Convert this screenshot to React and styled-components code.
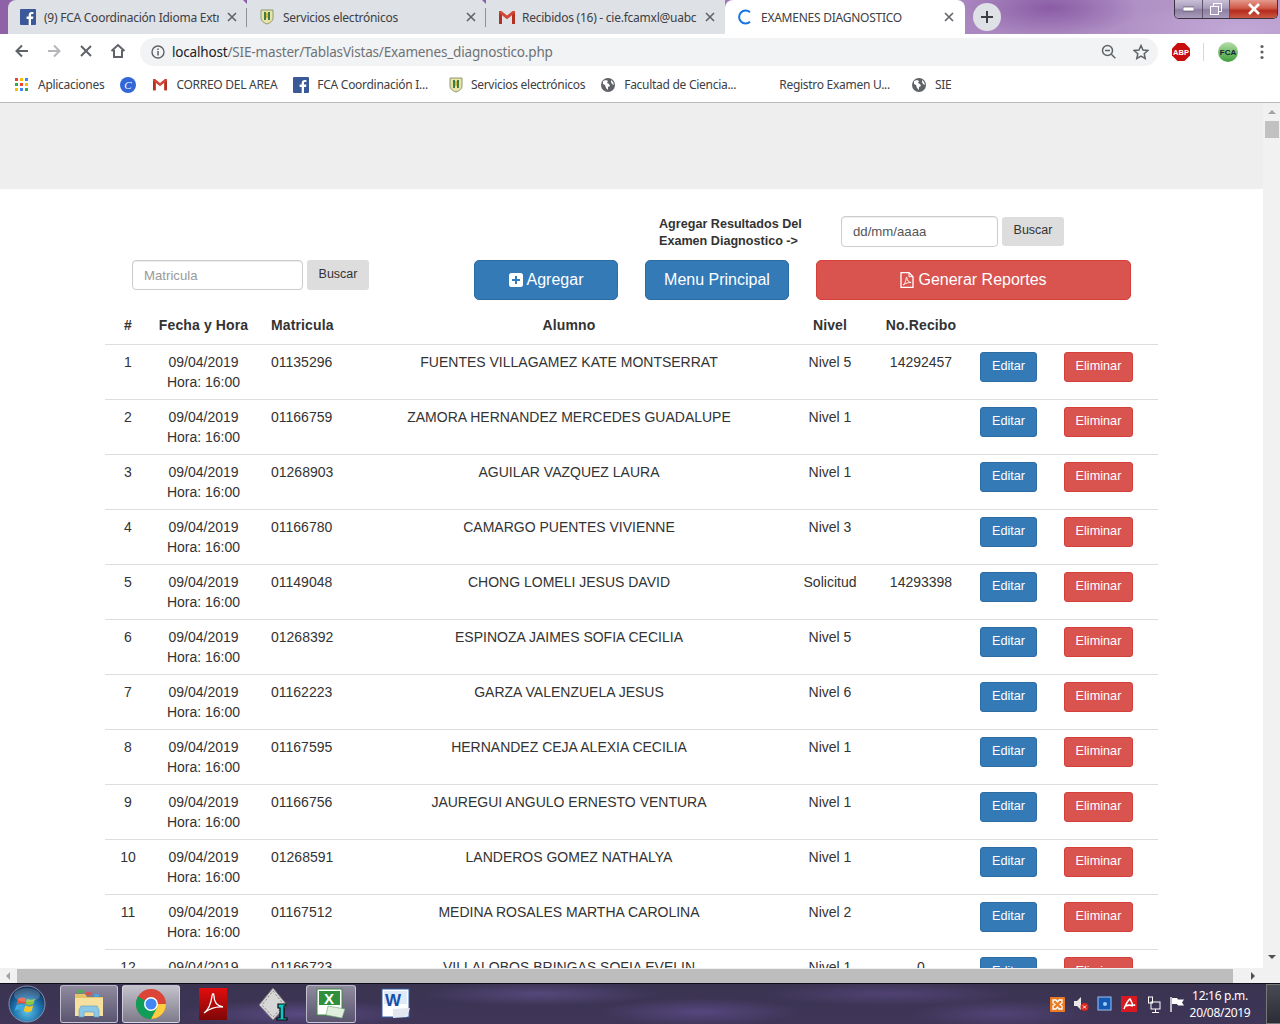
import React from "react";
import styled, { createGlobalStyle } from "styled-components";

const Global = createGlobalStyle`
  html, body { margin: 0; padding: 0; background: #fff; overflow: hidden; }
  * { box-sizing: border-box; }
`;

const Screen = styled.div`
  width: 1280px; height: 1024px; display: flex; flex-direction: column; overflow: hidden;
  font-family: "Liberation Sans", Arial, sans-serif; color: #333; font-size: 14px;
`;

/* ---------- Chrome ---------- */
const UI = `"Noto Sans", "Open Sans", sans-serif`;

const TabStrip = styled.div`
  height: 34px; flex: none; display: flex; position: relative; padding-left: 8px;
  background:
    radial-gradient(ellipse 90px 30px at 1050px 8px, #8a5ca6 0%, transparent 100%),
    radial-gradient(ellipse 120px 30px at 1240px 30px, #c1a8d6 0%, transparent 100%),
    linear-gradient(90deg, #8f62a8 0%, #9c74b2 50%, #b79acb 100%);
`;
const Tab = styled.div`
  width: ${p => p.$w}px; height: 34px; flex: none; display: flex; align-items: center; position: relative;
  background: ${p => (p.$active ? "#fff" : "#dee1e6")};
  border-radius: ${p => p.$radius || "0"};
  padding-left: ${p => p.$pad}px;
  ${p => p.$sep && `
    &::after { content: ""; position: absolute; right: 0; top: 8px; width: 1px; height: 19px; background: #8f9296; }
    &::before { content: ""; position: absolute; right: -4px; top: 0; border: 4px solid transparent; border-top-color: #8a5ca6; }
  `}
`;
const TabTitle = styled.span`
  font: 12px ${UI}; color: #3c4043; margin-left: ${p => p.$ml}px; width: ${p => p.$w}px; white-space: nowrap; overflow: hidden;
  letter-spacing: -0.25px;
`;
const TabClose = styled.svg`
  position: absolute; left: ${p => p.$x}px; top: 12px; width: 10px; height: 10px;
`;
const NewTab = styled.div`
  width: 28px; height: 28px; border-radius: 50%; background: #dee1e6; margin: 3px 0 0 8px;
  display: flex; align-items: center; justify-content: center;
`;
const WinButtons = styled.div`
  position: absolute; left: 1174px; top: 0; width: 104px; height: 19px; display: flex;
  border: 1px solid #3a3340; border-top: none; border-radius: 0 0 5px 5px; overflow: hidden;
`;
const WinButton = styled.div`
  width: ${p => p.$w}px; display: flex; align-items: center; justify-content: center;
  background: ${p => p.$red
    ? "linear-gradient(#e49a8c 0%, #cf5a48 45%, #b42a1c 60%, #cc5a44 100%)"
    : "linear-gradient(#c9c0d6 0%, #a99cbc 45%, #8d7ea2 55%, #a99cbc 100%)"};
  border-right: ${p => p.$red ? "none" : "1px solid #5d5468"};
`;

const Toolbar = styled.div`
  height: 33px; flex: none; background: #fff; display: flex; align-items: center; position: relative;
`;
const NavSlot = styled.div`
  width: 32px; height: 32px; display: flex; align-items: center; justify-content: center; flex: none;
`;
const NavGroup = styled.div`display: flex; margin: 0 6px;`;
const Omnibox = styled.div`
  width: 1018px; height: 28px; border-radius: 14px; background: #f1f3f4; display: flex; align-items: center;
  margin-left: 0; padding-left: 11px; position: relative; flex: none; margin-top: 3px;
`;
const Url = styled.span`
  font: 13.5px ${UI}; color: #6e7276; margin-left: 7px; letter-spacing: -0.17px; white-space: nowrap;
  b { font-weight: 400; color: #202124; }
`;
const OmniIcons = styled.div`
  margin-left: auto; display: flex; gap: 16px; align-items: center; padding-right: 9px;
`;
const ToolEnd = styled.div`
  display: flex; align-items: center; margin-left: 14px; margin-top: 2px;
`;
const Divider = styled.div`width: 1px; height: 18px; background: #d5d7da; margin: 0 14px 0 13px;`;

const Bookmarks = styled.div`
  height: 36px; flex: none; background: #fff; border-bottom: 1px solid #b9b9b9; display: flex; align-items: center;
  padding-left: 15px;
`;
const Bookmark = styled.div`
  display: flex; align-items: center; margin-left: ${p => p.$ml || 0}px; flex: none;
`;
const BookmarkText = styled.span`
  font: 12px ${UI}; color: #3c4043; margin-left: ${p => p.$ml ?? 8}px; white-space: nowrap; letter-spacing: -0.28px;
`;

/* ---------- Viewport ---------- */
const Viewport = styled.div`height: 865px; flex: none; display: flex;`;
const Page = styled.div`width: 1263px; overflow: hidden; flex: none; background: #fff;`;
const Banner = styled.div`height: 86px; background: #eee;`;
const Content = styled.div`padding-top: 27px;`;

const TopRow = styled.div`
  display: flex; align-items: ${p => p.$align || "flex-start"}; height: ${p => p.$h}px;
  padding-left: ${p => p.$pl}px;
`;
const Note = styled.div`
  width: 182px; font-size: 12.6px; font-weight: 700; line-height: 17px; color: #333; padding-top: 0; margin-top: 0;
`;
const Field = styled.input`
  width: ${p => p.$w}px; height: ${p => p.$h}px; border: 1px solid #ccc; border-radius: 4px; background: #fff;
  padding: 0 11px; font: 13.2px "Liberation Sans", Arial, sans-serif; color: #555; outline: none;
  box-shadow: inset 0 1px 1px rgba(0,0,0,.075); flex: none;
  &::placeholder { color: #999; opacity: 1; }
`;
const DateField = styled(Field)`
  &::placeholder { color: #555; }
`;
const SearchBtn = styled.div`
  width: 62px; height: 30px; background: #ddd; border-radius: 3px; margin-left: 4px; flex: none;
  display: flex; align-items: center; justify-content: center; font-size: 12.5px; color: #333; padding-bottom: 3px;
  margin-top: ${p => p.$mt || 0}px;
`;
const BigBtn = styled.div`
  width: ${p => p.$w}px; height: 40px; border-radius: 5px; flex: none; margin-left: ${p => p.$ml}px;
  background: ${p => (p.$red ? "#d9534f" : "#337ab7")}; border: 1px solid ${p => (p.$red ? "#d43f3a" : "#2e6da4")};
  color: #fff; font-size: 16px; display: flex; align-items: center; justify-content: center; gap: 4px;
`;

const Table = styled.table`
  margin-left: 105px; width: 1053px; table-layout: fixed; border-collapse: collapse; margin-top: 0;
`;
const Th = styled.th`
  height: 37px; padding: 0 0 0 ${p => p.$pl || 0}px; font-size: 14px; font-weight: 700; letter-spacing: .12px;
  text-align: ${p => p.$left ? "left" : "center"}; border-bottom: 1px solid #ddd; vertical-align: middle; color: #333;
`;
const Td = styled.td`
  height: 55px; padding: 7px 0 7px ${p => p.$pl || 0}px; font-size: 14px; line-height: 20px; vertical-align: top;
  text-align: ${p => p.$left ? "left" : "center"}; border-bottom: 1px solid #ddd; color: #333; white-space: nowrap;
`;
const RowBtn = styled.div`
  display: inline-flex; height: 30px; width: ${p => p.$w}px; align-items: center; justify-content: center;
  border-radius: 3px; color: #fff; font-size: 12.7px; padding-bottom: 2px;
  background: ${p => (p.$red ? "#d9534f" : "#337ab7")}; border: 1px solid ${p => (p.$red ? "#d43f3a" : "#2e6da4")};
`;

const VBar = styled.div`
  width: 17px; flex: none; background: #f1f1f1; position: relative; display: flex; flex-direction: column; align-items: center;
`;
const VThumb = styled.div`
  width: 14px; height: 17px; background: #c1c1c1; margin-top: 18px;
`;
const Arrow = styled.div`
  width: 0; height: 0; border: 4px solid transparent;
  ${p => p.$dir === "up" && `border-bottom-color: #a3a3a3; position:absolute; top: 3px;`}
  ${p => p.$dir === "down" && `border-top-color: #505050; position:absolute; bottom: -1px; margin-bottom: 6px;`}
  ${p => p.$dir === "left" && `border-right-color: #a3a3a3; margin-left: 2px;`}
  ${p => p.$dir === "right" && `border-left-color: #505050; margin-left: 18px;`}
`;
const HBar = styled.div`
  height: 15px; flex: none; background: #f1f1f1; display: flex; align-items: center;
`;
const HThumb = styled.div`width: 1216px; height: 14px; background: #bdbdbd; margin-left: 7px; flex: none;`;

/* ---------- Taskbar ---------- */
const Taskbar = styled.div`
  height: 41px; flex: none; position: relative; display: flex; align-items: center; border-top: 1px solid #0e0c16;
  background:
    radial-gradient(ellipse 120px 14px at 300px 30px, rgba(110,90,165,.55), transparent),
    radial-gradient(ellipse 120px 12px at 540px 10px, rgba(100,85,150,.6), transparent),
    radial-gradient(ellipse 100px 14px at 700px 28px, rgba(105,85,160,.55), transparent),
    radial-gradient(ellipse 130px 12px at 890px 10px, rgba(100,80,150,.5), transparent),
    radial-gradient(ellipse 90px 14px at 1000px 30px, rgba(100,80,150,.5), transparent),
    linear-gradient(#3a3350, #3f3658);
`;
const TaskItem = styled.div`
  width: ${p => p.$w}px; height: 38px; flex: none; margin-left: ${p => p.$ml}px; display: flex; align-items: center; justify-content: center;
  ${p => p.$open && `
    border-radius: 3px; border: 1px solid rgba(230,230,240,.65);
    background: linear-gradient(${p.$bright ? "#c4c2cc, #7d7a8a" : "#8f8a9e, #5a5470"});
  `}
`;
const Tray = styled.div`
  margin-left: auto; display: flex; align-items: center; height: 100%;
`;
const TrayIcon = styled.div`
  width: 16px; height: 18px; display: flex; align-items: center; justify-content: center; margin-right: ${p => p.$mr ?? 8}px;
`;
const Clock = styled.div`
  width: 64px; margin-left: 3px; text-align: center; color: #fff; font: 12px/17px ${UI}; letter-spacing: -0.3px;
`;
const ShowDesktop = styled.div`
  width: 14px; height: 100%; margin-left: 14px; border: 1px solid #777; border-right: none;
  background: linear-gradient(#4a4a55, #2c2c36);
`;

/* ---------- Icons ---------- */
const Fb = ({ s = 16 }) => (
  <svg width={s} height={s} viewBox="0 0 16 16"><rect width="16" height="16" rx="1" fill="#3b5998" /><path d="M11 16V10h2l.4-2.4H11V6.2c0-.7.3-1.1 1.2-1.1h1.2V3c-.5-.1-1.1-.1-1.7-.1-1.8 0-3 1.1-3 3.1v1.6H6.6V10h2.1v6z" fill="#fff" /></svg>
);
const Gmail = ({ s = 16 }) => (
  <svg width={s} height={s * 0.875} viewBox="0 0 16 14"><path d="M0 1h2.4L8 5.6 13.6 1H16v13h-3V5.3L8 9.3 3 5.3V14H0z" fill="#d14836" /><path d="M3 14V5.3L0 3v11z" fill="#b23121" /><path d="M13 14V5.3L16 3v11z" fill="#b23121" /></svg>
);
const Shield = () => (
  <svg width="14" height="16" viewBox="0 0 14 16"><path d="M1 1h12v8c0 3-3 5-6 6-3-1-6-3-6-6z" fill="#e9e3a8" stroke="#8c9a70" /><path d="M4 3h2v8H4zM8 3h2v8H8z" fill="#3f7d46" /><path d="M6 4h2v5H6z" fill="#d9b93f" /></svg>
);
const Globe = () => (
  <svg width="14" height="14" viewBox="0 0 14 14"><circle cx="7" cy="7" r="7" fill="#5f6368" /><path d="M2 3l3-1 2 1-1 2 2 1 1 2-2 1v3L5 10 4 7 2 6zM10 2l2 2 1 3-2-1-1-2z" fill="#fff" /></svg>
);
const Close = ({ x }) => (
  <TabClose $x={x} viewBox="0 0 10 10"><path d="M1 1l8 8M9 1l-8 8" stroke="#5f6368" strokeWidth="1.6" /></TabClose>
);
const Nav = ({ d, c = "#5f6368", w = 2 }) => (
  <NavSlot><svg width="18" height="18" viewBox="0 0 18 18" fill="none"><path d={d} stroke={c} strokeWidth={w} /></svg></NavSlot>
);
const AppsGrid = () => (
  <svg width="13" height="13" viewBox="0 0 13 13">
    {[["#ea4335", "#fbbc05", "#4285f4"], ["#34a853", "#ea4335", "#fbbc05"], ["#fbbc05", "#4285f4", "#34a853"]].map((r, y) =>
      r.map((c, x) => <rect key={x + "-" + y} x={x * 5} y={y * 5} width="3" height="3" fill={c} />))}
  </svg>
);
const Abp = () => (
  <svg width="18" height="18" viewBox="0 0 18 18"><path d="M5.5 0h7L18 5.5v7L12.5 18h-7L0 12.5v-7z" fill="#c70d0d" /><text x="9" y="12" fontSize="7.5" fontWeight="700" textAnchor="middle" fill="#fff" fontFamily="Liberation Sans">ABP</text></svg>
);
const Avatar = () => (
  <svg width="20" height="20" viewBox="0 0 20 20"><defs><linearGradient id="av" x1="0" y1="0" x2="0" y2="1"><stop offset="0" stopColor="#b6dfa9" /><stop offset="1" stopColor="#3d9d3a" /></linearGradient></defs><circle cx="10" cy="10" r="10" fill="url(#av)" /><text x="10" y="13" fontSize="8" fontWeight="700" textAnchor="middle" fill="#123" fontFamily="Liberation Sans">FCA</text></svg>
);
const Orb = () => (
  <svg width="38" height="38" viewBox="0 0 38 38">
    <defs><radialGradient id="orb" cx="50%" cy="70%" r="65%"><stop offset="0" stopColor="#5fc4e8" /><stop offset=".6" stopColor="#1b6ea8" /><stop offset="1" stopColor="#0e2f57" /></radialGradient></defs>
    <circle cx="19" cy="19" r="18" fill="url(#orb)" stroke="#8a8fa8" />
    <path d="M10 14c3-2 5-2 8-.5L16.500 19c-3-1.500-5-1.500-8 .5z" fill="#e8563a" />
    <path d="M19 13.700c3 1.500 5 1.500 8 0L25.500 19c-3 1.500-5 1.500-8 0z" fill="#8cc63f" />
    <path d="M8.200 20.500c3-2 5-2 8-.5L14.700 25.500c-3-1.500-5-1.500-8 .5z" fill="#40a9e0" />
    <path d="M17.200 20.500c3 1.500 5 1.500 8 0L23.700 26c-3 1.500-5 1.500-8 0z" fill="#f7c325" />
    <ellipse cx="19" cy="10" rx="13" ry="7" fill="rgba(255,255,255,.18)" />
  </svg>
);
const Folder = () => (
  <svg width="34" height="34" viewBox="0 0 34 34">
    <path d="M3 7h10l2 3h16v19H3z" fill="#e5c468" /><path d="M3 11h28v18H3z" fill="#f6e0a0" />
    <rect x="6" y="3" width="5" height="3" fill="#4caf50" /><rect x="14" y="5" width="5" height="3" fill="#d9534f" /><rect x="22" y="7" width="5" height="3" fill="#4aa3df" />
    <path d="M9 19h16l2 4v7h-5v-5H12v5H7v-7z" fill="#8cc8e8" stroke="#5a9cc0" strokeWidth=".6" />
  </svg>
);
const ChromeLogo = () => (
  <svg width="32" height="32" viewBox="0 0 32 32">
    <circle cx="16" cy="16" r="15" fill="#db4437" />
    <path d="M16 16L3 8.500A15 15 0 0 0 16 31l7-11z" fill="#0f9d58" />
    <path d="M16 16h15A15 15 0 0 1 16 31l7-13z" fill="#ffcd40" />
    <circle cx="16" cy="16" r="7" fill="#fff" /><circle cx="16" cy="16" r="5.500" fill="#4285f4" />
  </svg>
);
const Acrobat = () => (
  <svg width="28" height="32" viewBox="0 0 28 32">
    <defs><linearGradient id="ac" x1="0" y1="0" x2="0" y2="1"><stop offset="0" stopColor="#e30d0d" /><stop offset="1" stopColor="#7e0606" /></linearGradient></defs>
    <rect width="28" height="32" fill="url(#ac)" />
    <path d="M5 25c4-3 7-9 8-17 .3-3 2-3 2 0 0 6 3 10 9 11-6-.5-12 .5-19 6z" fill="none" stroke="#fff" strokeWidth="1.300" />
  </svg>
);
const Odd = () => (
  <svg width="34" height="36" viewBox="0 0 34 36">
    <path d="M15 2l14 17-14 15L1 19z" fill="#d7d7d7" stroke="#777" />
    <path d="M15 5l11 14-11 12L4 19z" fill="none" stroke="#888" strokeDasharray="2 2" />
    <path d="M20 18h8v2h-2v12h3v2H19v-2h3V22h-2z" fill="#13c4c4" stroke="#0a0a0a" strokeWidth="1.200" />
  </svg>
);
const Excel = () => (
  <svg width="30" height="32" viewBox="0 0 30 32">
    <rect x="1" y="1" width="25" height="26" fill="#fff" stroke="#3a8a3f" />
    <rect x="3" y="3" width="21" height="14" fill="#2f8f3a" />
    <text x="13" y="16" fontSize="15" fontWeight="700" textAnchor="middle" fill="#fff" fontFamily="Liberation Sans">X</text>
    <path d="M12 18l17 3-3 9-16-3z" fill="#dfeedd" stroke="#6aa86f" strokeWidth=".6" />
  </svg>
);
const Word = () => (
  <svg width="30" height="32" viewBox="0 0 30 32">
    <rect x="1" y="1" width="27" height="28" fill="#fff" stroke="#2f5ea8" />
    <rect x="3" y="3" width="23" height="13" fill="#dfe9f8" />
    <text x="12" y="18" fontSize="17" fontWeight="700" textAnchor="middle" fill="#1450a8" fontFamily="Liberation Sans">W</text>
    <path d="M12 21l17-1-3 9-14 1z" fill="#e2e6ee" />
  </svg>
);

const rows = [
  ["01135296", "FUENTES VILLAGAMEZ KATE MONTSERRAT", "Nivel 5", "14292457"],
  ["01166759", "ZAMORA HERNANDEZ MERCEDES GUADALUPE", "Nivel 1", ""],
  ["01268903", "AGUILAR VAZQUEZ LAURA", "Nivel 1", ""],
  ["01166780", "CAMARGO PUENTES VIVIENNE", "Nivel 3", ""],
  ["01149048", "CHONG LOMELI JESUS DAVID", "Solicitud", "14293398"],
  ["01268392", "ESPINOZA JAIMES SOFIA CECILIA", "Nivel 5", ""],
  ["01162223", "GARZA VALENZUELA JESUS", "Nivel 6", ""],
  ["01167595", "HERNANDEZ CEJA ALEXIA CECILIA", "Nivel 1", ""],
  ["01166756", "JAUREGUI ANGULO ERNESTO VENTURA", "Nivel 1", ""],
  ["01268591", "LANDEROS GOMEZ NATHALYA", "Nivel 1", ""],
  ["01167512", "MEDINA ROSALES MARTHA CAROLINA", "Nivel 2", ""],
  ["01166723", "VILLALOBOS BRINGAS SOFIA EVELIN", "Nivel 1", "0"],
];

export default function App() {
  return (
    <Screen>
      <Global />
      <TabStrip>
        <Tab $w={239} $pad={12} $sep $radius="8px 0 0 0">
          <Fb /><TabTitle $ml={8} $w={175}>(9) FCA Coordinación Idioma Extr</TabTitle><Close x={219} />
        </Tab>
        <Tab $w={239} $pad={13} $sep>
          <Shield /><TabTitle $ml={9} $w={175}>Servicios electrónicos</TabTitle><Close x={219} />
        </Tab>
        <Tab $w={239} $pad={13}>
          <Gmail /><TabTitle $ml={7} $w={175}>Recibidos (16) - cie.fcamxl@uabc</TabTitle><Close x={219} />
        </Tab>
        <Tab $w={240} $pad={12} $active $radius="8px 8px 0 0">
          <svg width="16" height="16" viewBox="0 0 16 16" fill="none"><path d="M13 3.200A6.500 6.500 0 1 0 13 12.800" stroke="#1a73e8" strokeWidth="2" /></svg>
          <TabTitle $ml={8} $w={175}>EXAMENES DIAGNOSTICO</TabTitle><Close x={219} />
        </Tab>
        <NewTab>
          <svg width="14" height="14" viewBox="0 0 14 14"><path d="M7 1v12M1 7h12" stroke="#3c4043" strokeWidth="2" /></svg>
        </NewTab>
        <WinButtons>
          <WinButton $w={28}><svg width="11" height="6" viewBox="0 0 11 6"><rect y="1" width="11" height="4" fill="#fff" stroke="#444" strokeWidth=".6" /></svg></WinButton>
          <WinButton $w={27}><svg width="12" height="12" viewBox="0 0 12 12"><rect x="3.500" y=".5" width="8" height="8" fill="none" stroke="#fff" /><rect x=".5" y="3.500" width="8" height="8" fill="#a99cbc" stroke="#fff" /></svg></WinButton>
          <WinButton $w={47} $red><svg width="14" height="12" viewBox="0 0 14 12"><path d="M2 1l10 10M12 1L2 11" stroke="#fff" strokeWidth="2.600" /></svg></WinButton>
        </WinButtons>
      </TabStrip>

      <Toolbar>
        <NavGroup>
          <Nav d="M15 9H4M9 3.500L3.500 9 9 14.500" />
          <Nav d="M3 9h11M9 3.500L14.500 9 9 14.500" c="#b4b6b9" />
          <Nav d="M4 4l10 10M14 4L4 14" />
          <Nav d="M2.500 9L9 3l6.500 6M5 8v7h8V8" />
        </NavGroup>
        <Omnibox>
          <svg width="14" height="14" viewBox="0 0 14 14" fill="none"><circle cx="7" cy="7" r="6" stroke="#5f6368" strokeWidth="1.400" /><path d="M7 6v4.500M7 3.500v1.500" stroke="#5f6368" strokeWidth="1.500" /></svg>
          <Url><b>localhost</b>/SIE-master/TablasVistas/Examenes_diagnostico.php</Url>
          <OmniIcons>
            <svg width="16" height="16" viewBox="0 0 16 16" fill="none"><circle cx="6.500" cy="6.500" r="5" stroke="#5f6368" strokeWidth="1.500" /><path d="M4 6.500h5M10.300 10.300l4 4" stroke="#5f6368" strokeWidth="1.500" /></svg>
            <svg width="16" height="16" viewBox="0 0 16 16" fill="none"><path d="M8 1.500l2 4.500 4.800.5-3.600 3.200 1 4.800L8 12.100l-4.200 2.400 1-4.800L1.200 6.500 6 6z" stroke="#5f6368" strokeWidth="1.500" /></svg>
          </OmniIcons>
        </Omnibox>
        <ToolEnd>
          <Abp />
          <Divider />
          <Avatar />
          <svg style={{ marginLeft: 22 }} width="4" height="16" viewBox="0 0 4 16"><circle cx="2" cy="2.500" r="1.600" fill="#5f6368" /><circle cx="2" cy="8" r="1.600" fill="#5f6368" /><circle cx="2" cy="13.500" r="1.600" fill="#5f6368" /></svg>
        </ToolEnd>
      </Toolbar>

      <Bookmarks>
        <Bookmark><AppsGrid /><BookmarkText $ml={10}>Aplicaciones</BookmarkText></Bookmark>
        <Bookmark $ml={16}>
          <svg width="16" height="16" viewBox="0 0 16 16"><circle cx="8" cy="8" r="8" fill="#3367d6" /><text x="8" y="12" fontSize="11" fontStyle="italic" textAnchor="middle" fill="#fff" fontFamily="Liberation Serif">C</text></svg>
        </Bookmark>
        <Bookmark $ml={17}><Gmail s={14} /><BookmarkText $ml={9}>CORREO DEL AREA</BookmarkText></Bookmark>
        <Bookmark $ml={16}><Fb /><BookmarkText>FCA Coordinación I...</BookmarkText></Bookmark>
        <Bookmark $ml={21}><Shield /><BookmarkText>Servicios electrónicos</BookmarkText></Bookmark>
        <Bookmark $ml={16}><Globe /><BookmarkText $ml={9}>Facultad de Ciencia...</BookmarkText></Bookmark>
        <Bookmark $ml={43}><BookmarkText $ml={0}>Registro Examen U...</BookmarkText></Bookmark>
        <Bookmark $ml={22}><Globe /><BookmarkText $ml={9}>SIE</BookmarkText></Bookmark>
      </Bookmarks>

      <Viewport>
        <Page>
          <Banner />
          <Content>
            <TopRow $h={44} $pl={659}>
              <Note>Agregar Resultados Del<br />Examen Diagnostico -&gt;</Note>
              <DateField $w={157} $h={31} placeholder="dd/mm/aaaa" readOnly />
              <SearchBtn $mt={1} style={{ height: 29 }}>Buscar</SearchBtn>
            </TopRow>
            <TopRow $h={47} $pl={132}>
              <Field $w={171} $h={30} placeholder="Matricula" readOnly />
              <SearchBtn>Buscar</SearchBtn>
              <BigBtn $w={144} $ml={105}>
                <svg width="14" height="14" viewBox="0 0 14 14"><rect width="14" height="14" rx="2.500" fill="#fff" /><path d="M7 3v8M3 7h8" stroke="#337ab7" strokeWidth="2" /></svg>
                Agregar
              </BigBtn>
              <BigBtn $w={144} $ml={27}>Menu Principal</BigBtn>
              <BigBtn $w={315} $ml={27} $red>
                <svg width="14" height="16" viewBox="0 0 14 16" fill="none"><path d="M1 .7h8l4 4v10.600H1z" stroke="#fff" strokeWidth="1.300" /><path d="M9 .7v4h4" stroke="#fff" /><path d="M3 13c2-1.500 3-4 3.200-7 .2-1 .9-1 .9 0 0 2.500 1.500 4 4 4.500-2.500 0-5 .5-8 2.500z" stroke="#fff" strokeWidth=".9" /></svg>
                Generar Reportes
              </BigBtn>
            </TopRow>
            <Table>
              <colgroup>
                <col width="46" /><col width="105" /><col width="95" /><col width="436" /><col width="86" /><col width="96" /><col width="80" /><col width="109" />
              </colgroup>
              <thead>
                <tr>
                  <Th>#</Th><Th>Fecha y Hora</Th><Th $left $pl={15}>Matricula</Th><Th>Alumno</Th><Th>Nivel</Th><Th>No.Recibo</Th><Th /><Th />
                </tr>
              </thead>
              <tbody>
                {rows.map((r, i) => (
                  <tr key={r[0]}>
                    <Td>{i + 1}</Td>
                    <Td>09/04/2019<br />Hora: 16:00</Td>
                    <Td $left $pl={15}>{r[0]}</Td>
                    <Td>{r[1]}</Td>
                    <Td>{r[2]}</Td>
                    <Td>{r[3]}</Td>
                    <Td $left $pl={11}><RowBtn $w={57}>Editar</RowBtn></Td>
                    <Td $left $pl={15}><RowBtn $w={69} $red>Eliminar</RowBtn></Td>
                  </tr>
                ))}
              </tbody>
            </Table>
          </Content>
        </Page>
        <VBar>
          <Arrow $dir="up" />
          <VThumb />
          <Arrow $dir="down" />
        </VBar>
      </Viewport>
      <HBar>
        <Arrow $dir="left" />
        <HThumb />
        <Arrow $dir="right" />
      </HBar>

      <Taskbar>
        <TaskItem $w={38} $ml={8}><Orb /></TaskItem>
        <TaskItem $w={58} $ml={14} $open><Folder /></TaskItem>
        <TaskItem $w={58} $ml={4} $open $bright><ChromeLogo /></TaskItem>
        <TaskItem $w={30} $ml={18}><Acrobat /></TaskItem>
        <TaskItem $w={34} $ml={30}><Odd /></TaskItem>
        <TaskItem $w={50} $ml={14} $open><Excel /></TaskItem>
        <TaskItem $w={30} $ml={25}><Word /></TaskItem>
        <Tray>
          <TrayIcon>
            <svg width="15" height="15" viewBox="0 0 15 15"><rect width="15" height="15" rx="1" fill="#ea7b24" /><path d="M3 3h3l1.500 2L9 3h3v3l-2 1.500L12 9v3H9L7.500 10 6 12H3V9l2-1.500L3 6z" fill="none" stroke="#fff" strokeWidth="1.300" /></svg>
          </TrayIcon>
          <TrayIcon>
            <svg width="16" height="16" viewBox="0 0 16 16"><path d="M1 5h3l4-4v13L4 10H1z" fill="#e8e8e8" /><circle cx="11.500" cy="11" r="4" fill="#d9261c" /><path d="M10 9.500l3 3M13 9.500l-3 3" stroke="#fff" /></svg>
          </TrayIcon>
          <TrayIcon>
            <svg width="16" height="16" viewBox="0 0 16 16"><rect x="1" y="1" width="13" height="13" fill="#1459b3" stroke="#9fc3ef" /><circle cx="8" cy="8" r="2" fill="#9fd0ff" /></svg>
          </TrayIcon>
          <TrayIcon>
            <svg width="16" height="16" viewBox="0 0 16 16"><rect width="16" height="16" fill="#d81920" /><path d="M3 13C5 8 7 4 9 3c1.500 2 2 5 3 6 1 .7 1.500.3 2-.5M5 10c2-1 5-1 7 0" fill="none" stroke="#fff" strokeWidth="1.500" /></svg>
          </TrayIcon>
          <TrayIcon>
            <svg width="15" height="17" viewBox="0 0 15 17" fill="none"><rect x="2.500" y="1" width="4" height="6" stroke="#fff" /><rect x="5" y="6" width="9" height="7" stroke="#fff" /><path d="M9.500 13v3M6 16.500h7" stroke="#fff" /></svg>
          </TrayIcon>
          <TrayIcon $mr={0}>
            <svg width="16" height="17" viewBox="0 0 16 17"><path d="M2 1v15" stroke="#fff" strokeWidth="1.300" /><path d="M3 2h5l1 1.500h6l-2 3 2 3H9L8 8H3z" fill="#fff" /></svg>
          </TrayIcon>
          <Clock>12:16 p.m.<br />20/08/2019</Clock>
          <ShowDesktop />
        </Tray>
      </Taskbar>
    </Screen>
  );
}
